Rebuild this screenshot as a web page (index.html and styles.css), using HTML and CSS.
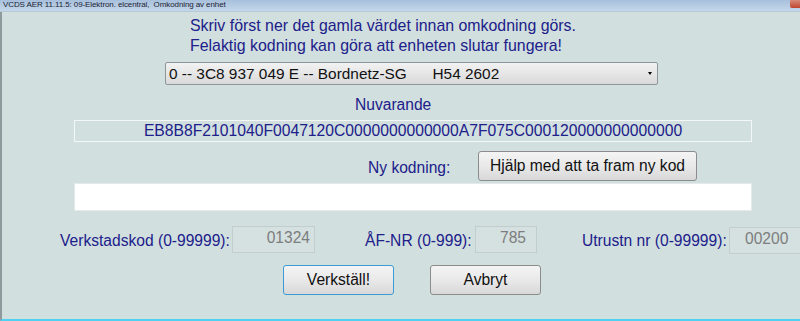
FILE: index.html
```html
<!DOCTYPE html>
<html lang="sv">
<head>
    <meta charset="UTF-8">
    <title>Omkodning av enhet</title>
    <link rel="stylesheet" href="styles.css">
</head>
<body>
<div class="window">
    <div class="titlebar">
        <span class="title">VCDS AER 11.11.5: 09-Elektron. elcentral,&nbsp; Omkodning av enhet</span>
        <span class="close"></span>
    </div>
    <div class="dialog">
        <div class="notice">
            <div>Skriv först ner det gamla värdet innan omkodning görs.</div>
            <div>Felaktig kodning kan göra att enheten slutar fungera!</div>
        </div>

        <div class="select">
            <span>0 -- 3C8 937 049 E -- Bordnetz-SG&nbsp;&nbsp;&nbsp;&nbsp;&nbsp; H54 2602</span>
            <span class="arrow"></span>
        </div>

        <div class="current-label">Nuvarande</div>
        <div class="code-box">EB8B8F2101040F0047120C0000000000000A7F075C000120000000000000</div>

        <div class="new-row">
            <span class="label">Ny kodning:</span>
            <button class="btn help">Hjälp med att ta fram ny kod</button>
        </div>
        <div class="new-input"></div>

        <div class="fields">
            <span class="label l-shop">Verkstadskod (0-99999):</span>
            <span class="field f-shop">01324</span>
            <span class="label l-af">ÅF-NR (0-999):</span>
            <span class="field f-af">785</span>
            <span class="label l-equip">Utrustn nr (0-99999):</span>
            <span class="field f-equip">00200</span>
        </div>

        <div class="actions">
            <button class="btn action primary">Verkställ!</button>
            <button class="btn action">Avbryt</button>
        </div>
    </div>
</div>
</body>
</html>
```

FILE: styles.css
```css
body {
    margin: 0;
    background: #d1dfdf;
    font-family: 'Liberation Sans', Arial, sans-serif;
    overflow: hidden;
}

.window {
    width: 800px;
    height: 321px;
    display: flex;
    flex-direction: column;
    overflow: hidden;
}

.titlebar {
    height: 11px;
    display: flex;
    justify-content: space-between;
    align-items: flex-start;
    background: linear-gradient(#a7c0dc, #c4d7e9);
    border-bottom: 1px solid #b6c9d6;
}

.title {
    font-size: 8px;
    line-height: 10px;
    padding-left: 3px;
    color: #1c2333;
    letter-spacing: -0.1px;
}

.close {
    width: 10px;
    height: 8px;
    background: linear-gradient(#d98a78, #c0452f);
    border-radius: 0 0 0 2px;
}

.dialog {
    flex: 1;
    display: flex;
    flex-direction: column;
    border-left: 2px solid #8e9a9e;
    border-bottom: 2px solid #4fd2f2;
    color: #20208a;
    font-size: 15.6px;
}

.notice {
    padding: 4px 0 0 188px;
    line-height: 20px;
    font-size: 15.9px;
}

.select {
    margin: 6px 0 0 163px;
    width: 488px;
    height: 21px;
    display: flex;
    align-items: center;
    justify-content: space-between;
    padding: 0 0 0 3px;
    border: 1px solid #8f9699;
    border-radius: 2px;
    background: linear-gradient(#f2f2f2, #e6e6e6 50%, #d9d9d9);
    color: #111;
    font-size: 15.4px;
}

.arrow {
    width: 0;
    height: 0;
    margin-right: 5px;
    border-left: 2px solid transparent;
    border-right: 2px solid transparent;
    border-top: 3px solid #000;
}

.current-label {
    margin: 11px 0 0 353px;
}

.code-box {
    margin: 6px 0 0 72px;
    width: 676px;
    height: 20px;
    line-height: 20px;
    border: 1px solid #f3f7f7;
    text-align: center;
    font-size: 15.7px;
}

.new-row {
    display: flex;
    align-items: center;
    margin: 8px 0 0 366px;
    height: 31px;
}

.new-row .label {
    margin-top: 4px;
    width: 110px;
}

.btn {
    font-family: 'Liberation Sans', Arial, sans-serif;
    font-size: 15.6px;
    color: #111;
    border: 1px solid #8c8c8c;
    border-radius: 3px;
    background: linear-gradient(#f4f4f4, #e9e9e9 50%, #d8d8d8);
    padding: 0;
}

.help {
    width: 219px;
    height: 30px;
}

.new-input {
    margin: 2px 0 0 72px;
    width: 676px;
    height: 26px;
    background: #fff;
    border: 1px solid #e4eaea;
}

.fields {
    display: flex;
    align-items: center;
    margin: 14px 0 0 58px;
    height: 28px;
}

.fields .label {
    flex: none;
    margin-top: 4px;
    white-space: nowrap;
}

.field {
    flex: none;
    height: 27px;
    box-sizing: border-box;
    border: 1px solid #c3cdcd;
    background: #d5e1e1;
    text-align: right;
    color: #7d7d7d;
    font-size: 15.6px;
    line-height: 22px;
    padding-right: 4px;
}

.l-shop {
    width: 172px;
}

.f-shop {
    width: 83px;
}

.l-af {
    margin-left: 50px;
    width: 110px;
}

.f-af {
    width: 62px;
    padding-right: 10px;
}

.l-equip {
    margin-left: 45px;
    width: 147px;
}

.f-equip {
    width: 80px;
    margin-top: 2px;
    text-align: left;
    padding-left: 15px;
}

.actions {
    display: flex;
    margin: 12px 0 0 281px;
    gap: 36px;
}

.action {
    width: 111px;
    height: 30px;
}

.primary {
    border-color: #3c9bd6;
}
```
